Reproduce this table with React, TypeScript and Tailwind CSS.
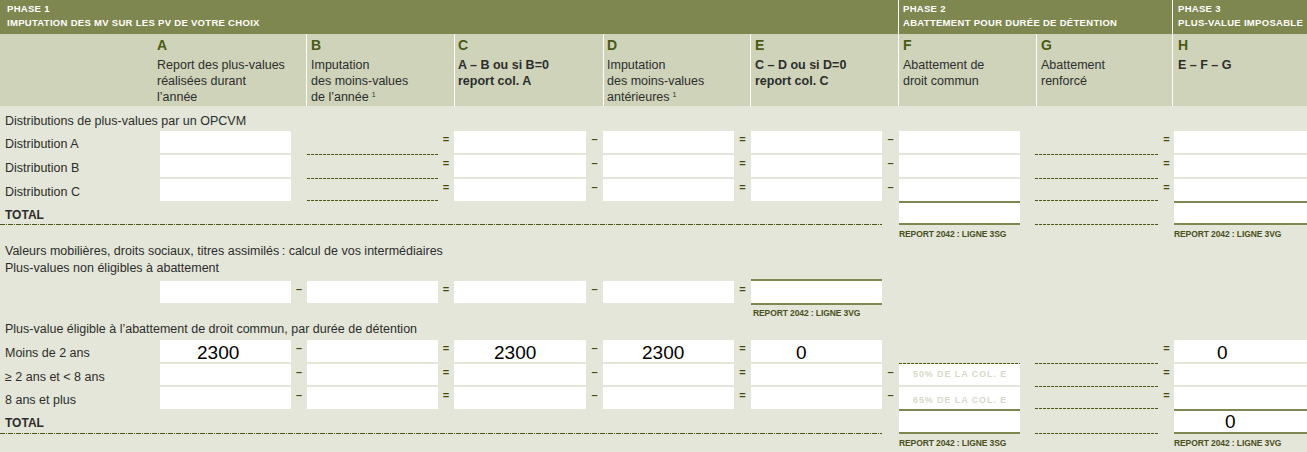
import React from "react";

const GRID =
  "grid grid-cols-[160px_131px_16px_131px_16px_132px_17px_131px_17px_131px_17px_121px_15px_124px_15px_133px]";

function Box({ v, pl = "", h = "h-[22px]" }: { v?: string; pl?: string; h?: string }) {
  return (
    <div className={`${h} bg-white text-[19px] leading-[26px] text-black whitespace-nowrap ${pl}`}>
      {v}
    </div>
  );
}

function Op({ c }: { c: string }) {
  return (
    <div className="flex justify-center pt-[1px] text-[11px] font-bold leading-[14px] text-[#434a12]">
      {c}
    </div>
  );
}

function Dash() {
  return (
    <div className="flex h-full items-end">
      <div className="h-px w-full bg-[image:repeating-linear-gradient(to_right,#4f5514_0_3px,transparent_3px_4px)]" />
    </div>
  );
}

function Label({ children }: { children: React.ReactNode }) {
  return <div className="pl-[5px] pt-[5px] text-[12.5px] leading-[16px] whitespace-nowrap">{children}</div>;
}

function Thick({ v, pl = "" }: { v?: string; pl?: string }) {
  return (
    <div className={`border-y-2 border-[#7f8750] bg-white text-[19px] leading-[21px] text-black ${pl}`}>{v}</div>
  );
}

function Report({ t }: { t: string }) {
  return (
    <div className="pt-[3px] text-[8.5px] font-bold leading-[12px] tracking-[-0.1px] text-[#4a4f1e] whitespace-nowrap">
      {t}
    </div>
  );
}

function Total() {
  return (
    <div className="col-span-10 flex flex-col">
      <div className="pl-[5px] pt-[6px] text-[12px] font-bold leading-[16px]">TOTAL</div>
      <div className="mt-auto h-px bg-[image:repeating-linear-gradient(to_right,#4f5514_0_5px,transparent_5px_6px,#4f5514_6px_7px,transparent_7px_8px)]" />
    </div>
  );
}

function Head({
  letter,
  lines,
  bold = false,
  cls,
}: {
  letter: string;
  lines: React.ReactNode[];
  bold?: boolean;
  cls: string;
}) {
  return (
    <div className={`pt-[3px] ${cls}`}>
      <div className="text-[14px] font-bold leading-[16px] text-[#4b5a14]">{letter}</div>
      <div className={`mt-[3.5px] text-[12.5px] leading-[16px] ${bold ? "font-bold" : ""}`}>
        {lines.map((l, i) => (
          <div key={i} className="whitespace-nowrap">
            {l}
          </div>
        ))}
      </div>
    </div>
  );
}

const Sup = () => <span className="relative -top-[4px] ml-[3px] text-[7px]">1</span>;

export default function App() {
  return (
    <div className="w-[1307px] h-[452px] overflow-hidden bg-[#e3e6d8] font-['Liberation_Sans',Arial,sans-serif] text-[#2d2d2d]">
      {/* dark band */}
      <div className="flex h-[34px] bg-[#7f8750] text-[9.5px] font-bold leading-[14px] tracking-[0.3px] text-white">
        <div className="w-[898px] pl-[7px] pt-[2px]">
          <div>PHASE 1</div>
          <div>IMPUTATION DES MV SUR LES PV DE VOTRE CHOIX</div>
        </div>
        <div className="w-[274px] border-l border-white pl-[4px] pt-[2px]">
          <div>PHASE 2</div>
          <div>ABATTEMENT POUR DURÉE DE DÉTENTION</div>
        </div>
        <div className="flex-1 border-l border-white pl-[5px] pt-[2px]">
          <div>PHASE 3</div>
          <div>PLUS-VALUE IMPOSABLE</div>
        </div>
      </div>

      {/* light header band */}
      <div className="flex h-[72px] bg-[#ced3b9]">
        <div className="w-[152px]" />
        <Head cls="w-[154px] pl-[5px]" letter="A" lines={["Report des plus-values", "réalisées durant", "l’année"]} />
        <Head
          cls="w-[148px] border-l border-white pl-[4px]"
          letter="B"
          lines={["Imputation", "des moins-values", <span>de l’année<Sup /></span>]}
        />
        <Head cls="w-[149px] border-l border-white pl-[3px]" bold letter="C" lines={["A – B ou si B=0", "report col. A"]} />
        <Head
          cls="w-[147px] border-l border-white pl-[3px]"
          letter="D"
          lines={["Imputation", "des moins-values", <span>antérieures<Sup /></span>]}
        />
        <Head cls="w-[148px] border-l border-white pl-[4px]" bold letter="E" lines={["C – D ou si D=0", "report col. C"]} />
        <Head cls="w-[138px] border-l border-white pl-[4px]" letter="F" lines={["Abattement de", "droit commun"]} />
        <Head cls="w-[136px] border-l border-white pl-[4px]" letter="G" lines={["Abattement", "renforcé"]} />
        <Head cls="flex-1 border-l border-white pl-[5px]" bold letter="H" lines={["E – F – G"]} />
      </div>

      {/* Section 1 */}
      <div className="flex h-[25px] items-end pb-[2px] pl-[5px] text-[12.5px] leading-[16px]">
        Distributions de plus-values par un OPCVM
      </div>
      {[
        ["Distribution A", "h-[24px]"],
        ["Distribution B", "h-[24px]"],
        ["Distribution C", "h-[22px]"],
      ].map(([label, h]) => (
        <div key={label} className={`${GRID} ${h}`}>
          <Label>{label}</Label>
          <Box />
          <div />
          <Dash />
          <Op c="=" />
          <Box />
          <Op c="–" />
          <Box />
          <Op c="=" />
          <Box />
          <Op c="–" />
          <Box />
          <div />
          <Dash />
          <Op c="=" />
          <Box />
        </div>
      ))}
      <div className={`${GRID} h-[24px]`}>
        <Total />
        <div />
        <Thick />
        <div />
        <Dash />
        <div />
        <Thick />
      </div>
      <div className={`${GRID} h-[17px]`}>
        <div className="col-span-11" />
        <Report t="REPORT 2042 : LIGNE 3SG" />
        <div />
        <div />
        <div />
        <Report t="REPORT 2042 : LIGNE 3VG" />
      </div>

      {/* Section 2 */}
      <div className="pl-[5px] text-[12.5px] leading-[18px]">
        Valeurs mobilières, droits sociaux, titres assimilés{"\u202f"}: calcul de vos intermédiaires
      </div>
      <div className="pl-[5px] text-[12.5px] leading-[17px]">Plus-values non éligibles à abattement</div>
      <div className="h-[2px]" />
      <div className={`${GRID} h-[26px] pt-[2px]`}>
        <div />
        <Box />
        <Op c="–" />
        <Box />
        <Op c="=" />
        <Box />
        <Op c="–" />
        <Box />
        <Op c="=" />
        <div className="-mt-[2px] h-[26px] border-y-2 border-[#7f8750] bg-white" />
      </div>
      <div className={`${GRID} h-[16px]`}>
        <div className="col-span-9" />
        <div className="pl-[2px]">
          <div className="-mt-[1px]">
            <Report t="REPORT 2042 : LIGNE 3VG" />
          </div>
        </div>
      </div>

      {/* Section 3 */}
      <div className="pl-[5px] text-[12.5px] leading-[16px]">
        Plus-value éligible à l’abattement de droit commun, par durée de détention
      </div>
      <div className="h-[3px]" />
      <div className={`${GRID} h-[24px]`}>
        <Label>Moins de 2 ans</Label>
        <Box v="2300" pl="pl-[37px]" />
        <Op c="–" />
        <Box />
        <Op c="=" />
        <Box v="2300" pl="pl-[40px]" />
        <Op c="–" />
        <Box v="2300" pl="pl-[39px]" />
        <Op c="=" />
        <Box v="0" pl="pl-[45px]" />
        <div />
        <Dash />
        <div />
        <Dash />
        <Op c="=" />
        <Box v="0" pl="pl-[43px]" />
      </div>
      <div className={`${GRID} h-[23px]`}>
        <Label>≥ 2 ans et &lt; 8 ans</Label>
        <Box h="h-[21px]" />
        <Op c="–" />
        <Box h="h-[21px]" />
        <Op c="=" />
        <Box h="h-[21px]" />
        <Op c="–" />
        <Box h="h-[21px]" />
        <Op c="=" />
        <Box h="h-[21px]" />
        <Op c="–" />
        <div className="h-[21px] bg-white pl-[14px] text-[9px] font-bold leading-[21px] tracking-[0.9px] text-[#d6dac6] whitespace-nowrap">
          50% DE LA COL. E
        </div>
        <div />
        <Dash />
        <Op c="=" />
        <Box h="h-[21px]" />
      </div>
      <div className={`${GRID} h-[22px]`}>
        <Label>8 ans et plus</Label>
        <Box />
        <Op c="–" />
        <Box />
        <Op c="=" />
        <Box />
        <Op c="–" />
        <Box />
        <Op c="=" />
        <Box />
        <Op c="–" />
        <div className="h-[22px] bg-white pl-[14px] pt-[4px] text-[9px] font-bold leading-[18px] tracking-[0.9px] text-[#d6dac6] whitespace-nowrap">
          65% DE LA COL. E
        </div>
        <div />
        <Dash />
        <Op c="=" />
        <Box />
      </div>
      <div className={`${GRID} h-[25px]`}>
        <Total />
        <div />
        <Thick />
        <div />
        <Dash />
        <div />
        <Thick v="0" pl="pl-[51px]" />
      </div>
      <div className={`${GRID} h-[18px]`}>
        <div className="col-span-11" />
        <Report t="REPORT 2042 : LIGNE 3SG" />
        <div />
        <div />
        <div />
        <Report t="REPORT 2042 : LIGNE 3VG" />
      </div>
    </div>
  );
}
